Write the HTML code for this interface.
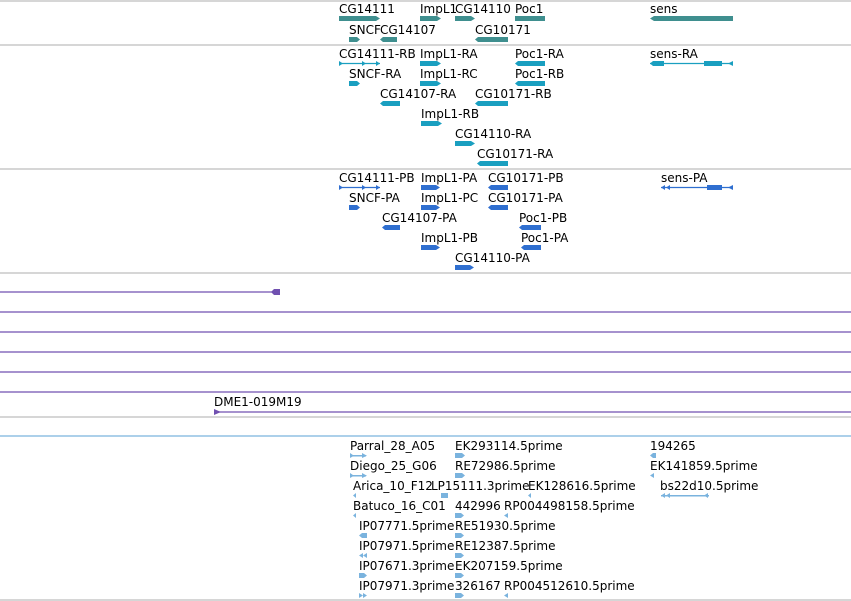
<!DOCTYPE html>
<html><head><meta charset="utf-8"><style>
html,body{margin:0;padding:0;background:#fff;width:851px;height:601px;overflow:hidden}
svg{display:block}
text{font-family:"DejaVu Sans","Liberation Sans",sans-serif;font-size:12px;fill:#000}
</style></head><body>
<svg width="851" height="601" viewBox="0 0 851 601" xmlns="http://www.w3.org/2000/svg">
<g stroke="#bdbdbd" stroke-width="1.2">
<line x1="0" y1="1" x2="851" y2="1"/><line x1="0" y1="45" x2="851" y2="45"/>
<line x1="0" y1="169" x2="851" y2="169"/><line x1="0" y1="273" x2="851" y2="273"/>
<line x1="0" y1="417" x2="851" y2="417"/><line x1="0" y1="600" x2="851" y2="600"/>
</g>
<line x1="0" y1="436" x2="851" y2="436" stroke="#7ab3de" stroke-width="1.2"/>

<!-- Track 1 -->
<g>
<text x="339" y="13">CG14111</text><text x="420" y="13">ImpL1</text><text x="455" y="13">CG14110</text><text x="515" y="13">Poc1</text><text x="650" y="13">sens</text>
<text x="349" y="34">SNCF</text><text x="380" y="34">CG14107</text><text x="475" y="34">CG10171</text>
</g>
<g fill="#3f8f8f">
<polygon points="339,16 376,16 380,18.5 376,21 339,21"/>
<polygon points="420,16 437,16 441,18.5 437,21 420,21"/>
<polygon points="455,16 471,16 475,18.5 471,21 455,21"/>
<rect x="515" y="16" width="30" height="5"/>
<polygon points="654,16 733,16 733,21 654,21 650,18.5"/>
<polygon points="349,37 357,37 360,39.5 357,42 349,42"/>
<polygon points="383,37 397,37 397,42 383,42 380,39.5"/>
<polygon points="478,37 508,37 508,42 478,42 475,39.5"/>
</g>

<!-- Track 2 -->
<g>
<text x="339" y="58">CG14111-RB</text><text x="420" y="58">ImpL1-RA</text><text x="515" y="58">Poc1-RA</text><text x="650" y="58">sens-RA</text>
<text x="349" y="78">SNCF-RA</text><text x="420" y="78">ImpL1-RC</text><text x="515" y="78">Poc1-RB</text>
<text x="380" y="98">CG14107-RA</text><text x="475" y="98">CG10171-RB</text>
<text x="421" y="118">ImpL1-RB</text>
<text x="455" y="138">CG14110-RA</text>
<text x="477" y="158">CG10171-RA</text>
</g>
<g fill="#1a9fc0" stroke="#1a9fc0">
<line x1="339" y1="63.5" x2="380" y2="63.5" stroke-width="1.2"/>
<polygon points="339,61 343,63.5 339,66" stroke="none"/><polygon points="362,61 366,63.5 362,66" stroke="none"/><polygon points="376,61 380,63.5 376,66" stroke="none"/>
<polygon points="420,61 437,61 441,63.5 437,66 420,66" stroke="none"/>
<polygon points="518,61 545,61 545,66 518,66 515,63.5" stroke="none"/>
<line x1="650" y1="63.5" x2="733" y2="63.5" stroke-width="1.2"/>
<polygon points="653,61 664,61 664,66 653,66 650,63.5" stroke="none"/>
<polygon points="704,61 722,61 722,66 704,66" stroke="none"/>
<polygon points="733,61 733,66 728,63.5" stroke="none"/>
<polygon points="349,81 357,81 360,83.5 357,86 349,86" stroke="none"/>
<polygon points="420,81 437,81 441,83.5 437,86 420,86" stroke="none"/>
<polygon points="518,81 545,81 545,86 518,86 515,83.5" stroke="none"/>
<polygon points="383,101 400,101 400,106 383,106 380,103.5" stroke="none"/>
<polygon points="478,101 508,101 508,106 478,106 475,103.5" stroke="none"/>
<polygon points="421,121 438,121 442,123.5 438,126 421,126" stroke="none"/>
<polygon points="455,141 471,141 475,143.5 471,146 455,146" stroke="none"/>
<polygon points="480,151 508,151 508,156 480,156 477,153.5" stroke="none" transform="translate(0,10)"/>
</g>

<!-- Track 3 -->
<g>
<text x="339" y="182">CG14111-PB</text><text x="421" y="182">ImpL1-PA</text><text x="488" y="182">CG10171-PB</text><text x="661" y="182">sens-PA</text>
<text x="349" y="202">SNCF-PA</text><text x="421" y="202">ImpL1-PC</text><text x="488" y="202">CG10171-PA</text>
<text x="382" y="222">CG14107-PA</text><text x="519" y="222">Poc1-PB</text>
<text x="421" y="242">ImpL1-PB</text><text x="521" y="242">Poc1-PA</text>
<text x="455" y="262">CG14110-PA</text>
</g>
<g fill="#2f6fd0" stroke="#2f6fd0">
<line x1="339" y1="187.5" x2="380" y2="187.5" stroke-width="1.2"/>
<polygon points="339,185 343,187.5 339,190" stroke="none"/><polygon points="362,185 366,187.5 362,190" stroke="none"/><polygon points="376,185 380,187.5 376,190" stroke="none"/>
<polygon points="421,185 436,185 440,187.5 436,190 421,190" stroke="none"/>
<polygon points="491,185 508,185 508,190 491,190 488,187.5" stroke="none"/>
<line x1="661" y1="187.5" x2="733" y2="187.5" stroke-width="1.2"/>
<polygon points="665,185 665,190 661,187.5" stroke="none"/><polygon points="670,185 670,190 666,187.5" stroke="none"/>
<rect x="707" y="185" width="15" height="5" stroke="none"/>
<polygon points="733,185 733,190 728,187.5" stroke="none"/>
<polygon points="349,205 357,205 360,207.5 357,210 349,210" stroke="none"/>
<polygon points="421,205 436,205 440,207.5 436,210 421,210" stroke="none"/>
<polygon points="491,205 508,205 508,210 491,210 488,207.5" stroke="none"/>
<polygon points="385,225 400,225 400,230 385,230 382,227.5" stroke="none"/>
<polygon points="522,225 541,225 541,230 522,230 519,227.5" stroke="none"/>
<polygon points="421,245 436,245 440,247.5 436,250 421,250" stroke="none"/>
<polygon points="524,245 541,245 541,250 524,250 521,247.5" stroke="none"/>
<polygon points="455,265 470,265 474,267.5 470,270 455,270" stroke="none"/>
</g>

<!-- Purple track -->
<g stroke="#7050b0" stroke-width="1.3">
<line x1="0" y1="292" x2="278" y2="292"/>
<line x1="0" y1="312" x2="851" y2="312"/><line x1="0" y1="332" x2="851" y2="332"/>
<line x1="0" y1="352" x2="851" y2="352"/><line x1="0" y1="372" x2="851" y2="372"/>
<line x1="0" y1="392" x2="851" y2="392"/><line x1="215" y1="412" x2="851" y2="412"/>
</g>
<polygon points="274,289 280,289 280,295 274,295 271,292" fill="#7050b0"/>
<polygon points="214,409 221,412 214,415" fill="#7050b0"/>
<text x="214" y="406">DME1-019M19</text>

<!-- Bottom track -->
<g>
<text x="350" y="450">Parral_28_A05</text><text x="455" y="450">EK293114.5prime</text><text x="650" y="450">194265</text>
<text x="350" y="470">Diego_25_G06</text><text x="455" y="470">RE72986.5prime</text><text x="650" y="470">EK141859.5prime</text>
<text x="353" y="490">Arica_10_F12</text><text x="431" y="490">LP15111.3prime</text><text x="528" y="490">EK128616.5prime</text><text x="660" y="490">bs22d10.5prime</text>
<text x="353" y="510">Batuco_16_C01</text><text x="455" y="510">442996</text><text x="504" y="510">RP004498158.5prime</text>
<text x="359" y="530">IP07771.5prime</text><text x="455" y="530">RE51930.5prime</text>
<text x="359" y="550">IP07971.5prime</text><text x="455" y="550">RE12387.5prime</text>
<text x="359" y="570">IP07671.3prime</text><text x="455" y="570">EK207159.5prime</text>
<text x="359" y="590">IP07971.3prime</text><text x="455" y="590">326167</text><text x="504" y="590">RP004512610.5prime</text>
</g>
<g fill="#7ab3de">
<rect x="350" y="455" width="16" height="1.5"/><polygon points="350,453 354,455.7 350,458"/><polygon points="362,453 367,455.7 362,458"/>
<polygon points="455,453 462,453 465,455.5 462,458 455,458"/>
<polygon points="653,453 656,453 656,458 653,458 650,455.5"/>
<rect x="350" y="475" width="16" height="1.5"/><polygon points="350,473 354,475.7 350,478"/><polygon points="362,473 367,475.7 362,478"/>
<polygon points="455,473 462,473 465,475.5 462,478 455,478"/>
<polygon points="654,473 654,478 650,475.5"/>
<polygon points="356,493 356,498 353,495.5"/><polygon points="441,493 448,493 448,498 441,498"/><polygon points="531,493 531,498 528,495.5"/>
<rect x="661" y="495" width="48" height="1.5"/><polygon points="665,493 665,498 661,495.5"/><polygon points="670,493 670,498 666,495.5"/><polygon points="708,493 708,498 704,495.5"/>
<polygon points="356,513 356,518 353,515.5"/><polygon points="455,513 461,513 464,515.5 461,518 455,518"/><polygon points="508,513 508,518 504,515.5"/>
<polygon points="362,533 367,533 367,538 362,538 359,535.5"/><polygon points="455,533 461,533 464,535.5 461,538 455,538"/>
<polygon points="363,553 363,558 359,555.5"/><polygon points="367,553 367,558 363,555.5"/><polygon points="455,553 461,553 464,555.5 461,558 455,558"/>
<polygon points="359,573 364,573 367,575.5 364,578 359,578"/><polygon points="455,573 461,573 464,575.5 461,578 455,578"/>
<polygon points="359,593 363,595.5 359,598"/><polygon points="363,593 367,595.5 363,598"/><polygon points="455,593 461,593 464,595.5 461,598 455,598"/><polygon points="508,593 508,598 504,595.5"/>
</g>
</svg>
</body></html>
